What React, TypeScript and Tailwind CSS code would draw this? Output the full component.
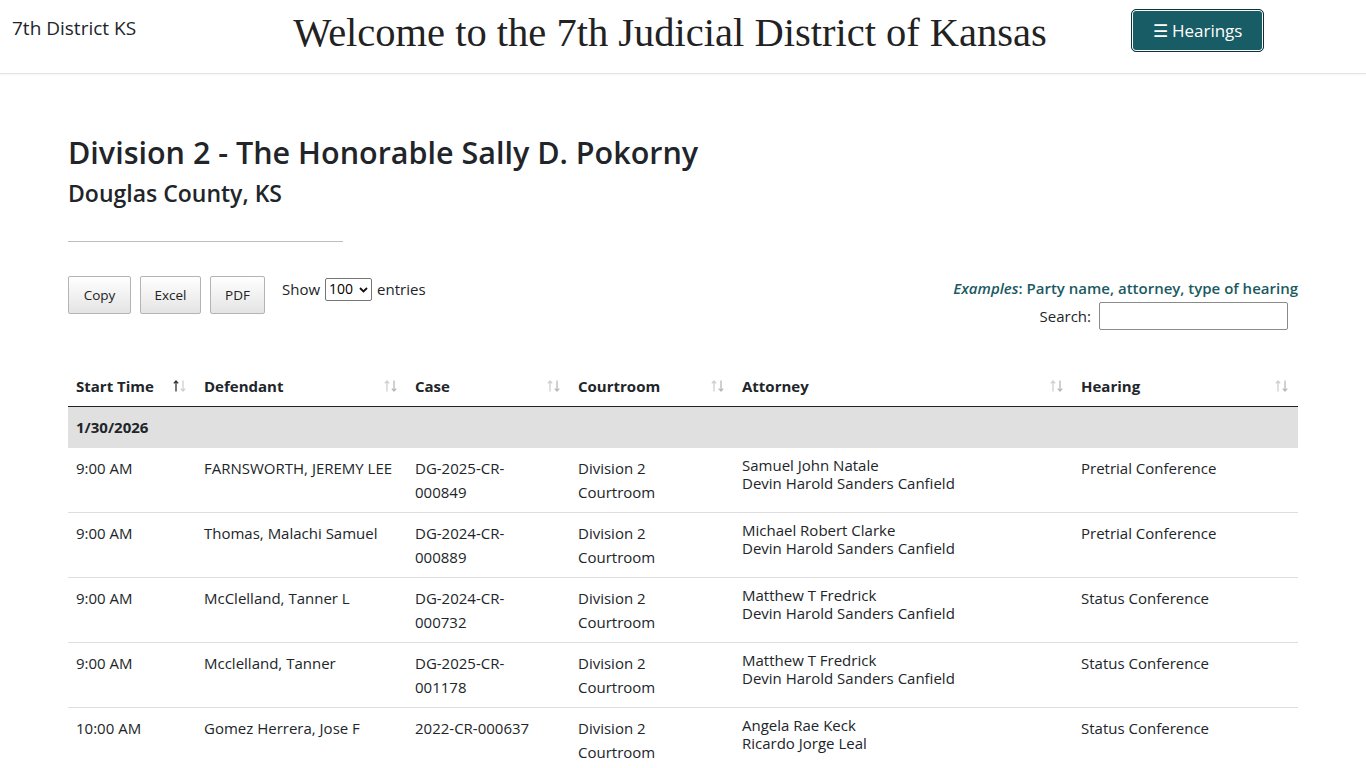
import React from 'react';

type Row = {
  time: string;
  defendant: string;
  caseNo: string;
  attorneys: string[];
  hearing: string;
};

const rows: Row[] = [
  { time: '9:00 AM', defendant: 'FARNSWORTH, JEREMY LEE', caseNo: 'DG-2025-CR-000849', attorneys: ['Samuel John Natale', 'Devin Harold Sanders Canfield'], hearing: 'Pretrial Conference' },
  { time: '9:00 AM', defendant: 'Thomas, Malachi Samuel', caseNo: 'DG-2024-CR-000889', attorneys: ['Michael Robert Clarke', 'Devin Harold Sanders Canfield'], hearing: 'Pretrial Conference' },
  { time: '9:00 AM', defendant: 'McClelland, Tanner L', caseNo: 'DG-2024-CR-000732', attorneys: ['Matthew T Fredrick', 'Devin Harold Sanders Canfield'], hearing: 'Status Conference' },
  { time: '9:00 AM', defendant: 'Mcclelland, Tanner', caseNo: 'DG-2025-CR-001178', attorneys: ['Matthew T Fredrick', 'Devin Harold Sanders Canfield'], hearing: 'Status Conference' },
  { time: '10:00 AM', defendant: 'Gomez Herrera, Jose F', caseNo: '2022-CR-000637', attorneys: ['Angela Rae Keck', 'Ricardo Jorge Leal'], hearing: 'Status Conference' },
];

const columns = [
  { label: 'Start Time', width: 'w-[128px]', sorted: true },
  { label: 'Defendant', width: 'w-[211px]' },
  { label: 'Case', width: 'w-[163px]' },
  { label: 'Courtroom', width: 'w-[164px]' },
  { label: 'Attorney', width: 'w-[339px]' },
  { label: 'Hearing', width: 'w-[225px]' },
];

// DataTables-style up/down sort arrows
function SortArrows({ active }: { active?: boolean }) {
  const up = active ? '#333' : '#cfcfcf';
  const down = active ? '#cfcfcf' : '#b8b8b8';
  return (
    <svg width="13" height="12" viewBox="0 0 13 12" className="mr-[2px] shrink-0">
      <path d="M3 11.5V1M0.8 3.4L3 1l2.2 2.4" fill="none" stroke={up} strokeWidth="1.3" />
      <path d="M10 0.5V11M7.8 8.6L10 11l2.2-2.4" fill="none" stroke={down} strokeWidth="1.3" />
    </svg>
  );
}

function ToolButton({ label, w }: { label: string; w: string }) {
  return (
    <button className={`${w} h-[38px] rounded-[2px] border border-[#b4b4b4] bg-linear-to-b from-white to-[#e4e4e4] text-[13.5px] text-[#222]`}>
      {label}
    </button>
  );
}

export default function App() {
  return (
    <div className="min-h-screen bg-white text-[#212529] font-['Open_Sans','Noto_Sans',sans-serif]">
      <header className="flex h-[74px] items-start border-b border-[#e3e3e3] shadow-[0_1px_2px_rgba(0,0,0,0.04)]">
        <div className="w-[282px] pl-3 pt-[16px] text-[19px] leading-6">7th District KS</div>
        <h1 className="flex-1 pt-[9px] text-center font-['Liberation_Serif','DejaVu_Serif',serif] text-[40.5px] leading-[48px] text-[#222]">
          Welcome to the 7th Judicial District of Kansas
        </h1>
        <div className="w-[308px] pt-[9px] pl-[73px]">
          <button className="h-[43px] w-[133px] rounded-[5px] border border-[#0c3338] bg-[#185c65] text-[17px] text-white shadow-[inset_0_0_0_1px_#ffffff]">
            ☰ Hearings
          </button>
        </div>
      </header>

      <main className="px-[68px]">
        <h2 className="mt-[60px] text-[30.5px] font-semibold leading-9">Division 2 - The Honorable Sally D. Pokorny</h2>
        <h3 className="mt-[10px] text-[23px] font-semibold leading-[26px]">Douglas County, KS</h3>
        <hr className="mt-[35px] w-[275px] border-t border-[#bdbdbd]" />

        <div className="mt-[34px] flex items-start justify-between">
          <div className="flex items-start gap-[9px]">
            <ToolButton label="Copy" w="w-[63px]" />
            <ToolButton label="Excel" w="w-[61px]" />
            <ToolButton label="PDF" w="w-[55px]" />
            <div className="ml-[8px] flex items-center gap-[5px] pt-px text-[15px] leading-[24px]">
              <span>Show</span>
              <span className="inline-flex h-[23px] w-[47px] items-center justify-between rounded-[2px] border border-[#767676] pl-[3px] pr-[3px] text-[14px] text-black">
                100
                <svg width="9" height="6" viewBox="0 0 9 6" className="mt-px">
                  <path d="M1 1l3.5 3.5L8 1" fill="none" stroke="#111" strokeWidth="1.8" />
                </svg>
              </span>
              <span>entries</span>
            </div>
          </div>

          <div className="flex flex-col items-end text-[15px]">
            <div className="leading-6 font-semibold text-[#1b5a62]">
              <em>Examples</em>: Party name, attorney, type of hearing
            </div>
            <div className="mt-[2px] mr-[10px] flex items-center gap-2">
              <span>Search:</span>
              <input className="h-[28px] w-[189px] rounded-[2px] border border-[#8a8a8a] px-1 outline-none" />
            </div>
          </div>
        </div>

        <table className="mt-10 w-full table-fixed border-collapse text-[15px]">
          <thead>
            <tr className="border-b border-[#222]">
              {columns.map((c) => (
                <th key={c.label} className={`${c.width} px-2 pt-[4px] pb-[8px] text-left font-bold leading-6`}>
                  <div className="flex items-center justify-between">
                    <span>{c.label}</span>
                    <SortArrows active={c.sorted} />
                  </div>
                </th>
              ))}
            </tr>
          </thead>
          <tbody>
            <tr className="bg-[#e0e0e0]">
              <td colSpan={6} className="h-[41px] px-2 font-bold">1/30/2026</td>
            </tr>
            {rows.map((r, i) => (
              <tr key={i} className="border-b border-[#dedede] align-top">
                <td className="px-2 py-2 leading-6">{r.time}</td>
                <td className="px-2 py-2 leading-6 whitespace-nowrap">{r.defendant}</td>
                <td className="px-2 py-2 leading-6">
                  <div className="max-w-[130px]">{r.caseNo}</div>
                </td>
                <td className="px-2 py-2 leading-6">Division 2 Courtroom</td>
                <td className="px-2 py-2 leading-[18px]">
                  {r.attorneys.map((a) => (
                    <div key={a}>{a}</div>
                  ))}
                </td>
                <td className="px-2 py-2 leading-6">{r.hearing}</td>
              </tr>
            ))}
          </tbody>
        </table>
      </main>
    </div>
  );
}
